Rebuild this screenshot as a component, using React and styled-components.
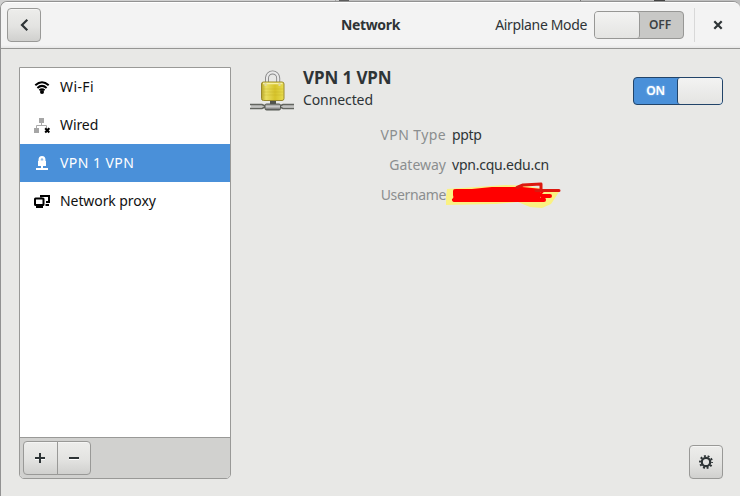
import React from "react";
import styled, { createGlobalStyle, css } from "styled-components";

const Global = createGlobalStyle`
  * { box-sizing: border-box; }
  body { margin: 0; background: #c9c9c7; }
`;

const Desktop = styled.div`
  width: 740px;
  height: 496px;
  padding-top: 1px;
  overflow: hidden;
  background: linear-gradient(90deg, #d0d0d0 0 335px, #a5a5a5 335px 336px, #c8c8c8 336px 339px, #5d5d5d 339px 349px, #bfbfbf 349px 580px, #777 580px 581px, #bfbfbf 581px 654px, #444 654px 665px, #bfbfbf 665px);
  font: 14px/20px "Noto Sans", "Open Sans", sans-serif;
  color: #2e3436;
`;

const Window = styled.div`
  height: 495px;
  display: flex;
  flex-direction: column;
  border: solid #929292;
  border-width: 1px 0 0 1px;
  border-radius: 7px 7px 0 0;
  background: #e8e8e6;
  overflow: hidden;
`;

const Header = styled.header`
  height: 47px;
  flex: none;
  display: grid;
  grid-template-columns: 1fr auto 1fr;
  align-items: center;
  padding: 0 6px;
  background: linear-gradient(#fff 0 1px, #f3f3f3 1px 43px, #e6e6e6 46px);
  border-bottom: 1px solid #959593;
`;

const HeaderEnd = styled.div`
  display: flex;
  align-items: center;
  justify-content: flex-end;
  gap: 7px;
  margin-right: 8px;
`;

const Text = styled.span`
  display: inline-block;
  white-space: nowrap;
  letter-spacing: ${(p) => p.$track || 0}px;
`;

const Title = styled(Text)`
  font-weight: 700;
`;

const raised = css`
  border: 1px solid #999997;
  background: linear-gradient(#ededeb, #e3e3e1 55%, #d0d0ce);
  box-shadow: inset 0 1px #f5f5f4;
`;

const Button = styled.button`
  ${raised}
  width: 34px;
  height: 34px;
  padding: 0;
  display: grid;
  place-items: center;
  border-radius: 4px;
  color: #2e3436;
`;

const SegmentedButton = styled(Button)`
  &:first-child { width: 35px; border-radius: 4px 0 0 4px; padding-right: 1px; }
  &:last-child { margin-left: -1px; border-radius: 0 4px 4px 0; }
`;

const SwitchTrack = styled.div`
  width: 90px;
  height: 28px;
  display: flex;
  flex: none;
  flex-direction: ${(p) => (p.$on ? "row" : "row-reverse")};
  border: 1px solid ${(p) => (p.$on ? "#224469" : "#979795")};
  border-radius: 4px;
  background: ${(p) => (p.$on ? "#4a90d9" : "#c8c8c6")};
  overflow: hidden;
`;

const SwitchLabel = styled.span`
  flex: 1;
  text-align: center;
  font-size: 12px;
  line-height: 26px;
  font-weight: 600;
  letter-spacing: ${(p) => (p.$on ? -0.3 : -0.1)}px;
  padding-right: ${(p) => (p.$on ? 0 : 3)}px;
  color: ${(p) => (p.$on ? "#fff" : "#3c4143")};
  text-shadow: ${(p) => (p.$on ? "0 0 2px #a9d1f7" : "none")};
`;

const Knob = styled.span`
  width: 45px;
  border: solid ${(p) => (p.$on ? "#224469" : "#979795")};
  border-width: ${(p) => (p.$on ? "0 0 0 1px" : "0 1px 0 0")};
  border-radius: ${(p) => (p.$on ? "3px 0 0 3px" : "0 3px 3px 0")};
  background: linear-gradient(#f3f3f2, #e4e4e2);
`;

const Divider = styled.i`
  width: 1px;
  height: 34px;
  margin: 0 8px 0 3px;
  background: #d8d8d8;
`;

const Content = styled.main`
  flex: 1;
  display: flex;
  gap: 18px;
  padding: 18px 17px 17px 18px;
`;

const Sidebar = styled.aside`
  width: 212px;
  display: flex;
  flex-direction: column;
  border: 1px solid #999997;
  border-radius: 0 0 5px 5px;
  background: #fff;
  overflow: hidden;
`;

const Connections = styled.div`
  flex: 1;
`;

const Row = styled.div`
  height: 38px;
  display: flex;
  align-items: center;
  gap: 10px;
  padding-left: 14px;
  background: ${(p) => (p.$active ? "#4a90d9" : "transparent")};
  color: ${(p) => (p.$active ? "#fff" : "#111")};
  svg { margin-top: 2px; }
`;

const Tools = styled.div`
  height: 41px;
  display: flex;
  padding: 3px;
  border-top: 1px solid #999997;
  background: #d1d1cf;
`;

const Details = styled.section`
  flex: 1;
  display: flex;
  flex-direction: column;
`;

const Summary = styled.div`
  display: flex;
  align-items: flex-start;
  height: 53px;
`;

const Names = styled.div`
  flex: 1;
  margin-left: 6px;
`;

const Name = styled(Text)`
  display: block;
  font-size: 17px;
  line-height: 22px;
  font-weight: 700;
`;

const Status = styled(Text)`
  display: block;
  line-height: 22px;
`;

const SwitchSlot = styled.div`
  margin-top: 10px;
`;

const Facts = styled.div`
  flex: 1;
  display: grid;
  grid-template-columns: 197px 1fr;
  grid-auto-rows: 30px;
  column-gap: 6px;
  line-height: 30px;
`;

const FactLabel = styled(Text)`
  text-align: right;
  color: #8b8e8f;
`;

const FactValue = styled(Text)`
  svg { display: block; margin: 2px 0 0 -6px; }
`;

const DetailFooter = styled.div`
  display: flex;
  justify-content: flex-end;
`;

const Back = () => (
  <svg width="16" height="16" fill="none" stroke="currentColor" strokeWidth="2.2">
    <path d="M11.3 2.8 6 8l5.3 5.2" />
  </svg>
);

const Close = () => (
  <svg width="16" height="16" fill="none" stroke="#2e3436" strokeWidth="2.2">
    <path d="m4.3 4.3 7.4 7.4m0-7.4-7.4 7.4" />
  </svg>
);

const Plus = () => (
  <svg width="16" height="16" fill="none" strokeWidth="2">
    <path d="M3 9h10" stroke="#fff" />
    <path d="M8 3v10M3 8h10" stroke="#2e3436" />
  </svg>
);

const Minus = () => (
  <svg width="16" height="16" fill="none" strokeWidth="2">
    <path d="M3 9h10" stroke="#fff" />
    <path d="M3 8h10" stroke="#2e3436" />
  </svg>
);

const Gear = () => (
  <svg width="16" height="16" fill="none" stroke="#2e3436">
    <circle cx="8" cy="8" r="4.2" strokeWidth="2.2" />
    <circle cx="8" cy="8" r="6" strokeWidth="2" strokeDasharray="1.9 1.87" strokeDashoffset=".95" />
  </svg>
);

const Wifi = () => (
  <svg width="16" height="16" fill="none" stroke="#000" strokeWidth="2">
    <path d="M1.3 5.3Q8 -.7 14.7 5.3M3.4 7.9q4.6-4 9.2 0M5.4 10.2q2.6-2 5.2 0" />
    <circle cx="8" cy="12" r="2" fill="#000" stroke="none" />
  </svg>
);

const Wired = () => (
  <svg width="16" height="16" fill="none">
    <path d="M5 0h5v5H5zM0 10h5v5H0z" fill="#a6a6a6" />
    <path d="M7.5 5v2.5M2.5 10V7.5h10V10" stroke="#aaa" />
    <path d="m11.2 10.2 4.1 4.3m0-4.3-4.1 4.3" stroke="#000" strokeWidth="2" />
  </svg>
);

const VpnIcon = () => (
  <svg width="16" height="16">
    <path d="M4.5 5V4a3.5 4 0 0 1 7 0v1h.5v5H9v2h5v2H2v-2h5v-2H4V5z" fill="#fff" />
    <path d="M6.8 4.6V3.4a1.2 1.2 0 0 1 2.4 0v1.2z" fill="#8ebbe8" />
  </svg>
);

const Proxy = () => (
  <svg width="16" height="16" fill="none" stroke="#000" strokeWidth="2">
    <path d="M7 3.5V2h8v6h-3" />
    <path d="M11.5 11H15" />
    <rect x="1" y="4.5" width="8.5" height="6.5" rx=".5" fill="#fff" />
    <path d="M2 13h7" />
    <path d="M5.5 11v2" strokeWidth="4" />
  </svg>
);

const PadlockNetwork = () => (
  <svg width="48" height="48" fill="none">
    <defs>
      <linearGradient id="brass">
        <stop stopColor="#b7a52a" />
        <stop offset=".2" stopColor="#eadf62" />
        <stop offset=".6" stopColor="#d6c32b" />
        <stop offset="1" stopColor="#e8dd50" />
      </linearGradient>
      <linearGradient id="cable" x2="0" y2="1">
        <stop stopColor="#888" />
        <stop offset=".45" stopColor="#ccc" />
        <stop offset="1" stopColor="#555" />
      </linearGradient>
    </defs>
    <path d="M2 39h43" stroke="#c2c2c0" strokeWidth="3" />
    <path d="M1 37.5h12l3 1.5h15l3-1.5h11M1 41.5h12l3-1.5h15l3 1.5h11" stroke="#62645f" strokeWidth="1.5" />
    <path d="M21 33h6v4h-6z" fill="#51534d" />
    <rect x="16" y="37" width="15.5" height="6" rx="1.5" fill="url(#cable)" stroke="#555852" />
    <path d="M18 18v-7a5.6 5.6 0 0 1 11.2 0v7" stroke="#858585" strokeWidth="4" />
    <path d="M18 18v-7a5.6 5.6 0 0 1 11.2 0v7" stroke="#e9e9e9" strokeWidth="2.2" />
    <rect x="12.5" y="15" width="22.5" height="18.5" rx="2" fill="url(#brass)" stroke="#99892c" />
    <path d="M14 16.5h23" stroke="none" />
    <path d="M14 16.5h19.5" stroke="#f8f1a4" strokeWidth="1.6" />
    <path d="M16.5 16v3M30.5 16v3" stroke="#ded7a0" strokeWidth="2" />
    <path d="M14 22h20M14 25h20M14 28h20" stroke="#bca922" strokeOpacity=".3" />
  </svg>
);

const Redaction = () => (
  <svg width="122" height="28" fill="none" strokeLinecap="round" strokeLinejoin="round">
    <path d="M1 7 30 5 60 3l22 1 31 6-8 12-9 4-12-1-12-5-22 2-51 1z" fill="#faf182" />
    <path d="M8 8h17l20-2h33l16 2v9l-8 3-79-1z" fill="#f00" />
    <path d="M9 9v4l5 1-6 4h79M10 9h16l20-2h30l20 2-7 8M80 18h18l-2-4h8" stroke="#f00" strokeWidth="4" />
    <path d="m71 5.5 6-2.5 18-1v6M90 8.5h23" stroke="#dc180f" strokeWidth="3" />
  </svg>
);

function Switch({ on }) {
  return (
    <SwitchTrack $on={on} role="switch" aria-checked={on}>
      <SwitchLabel $on={on}>{on ? "ON" : "OFF"}</SwitchLabel>
      <Knob $on={on} />
    </SwitchTrack>
  );
}

const connections = [
  { name: "Wi-Fi", Icon: Wifi, track: 0.4 },
  { name: "Wired", Icon: Wired, track: -0.1 },
  { name: "VPN 1 VPN", Icon: VpnIcon, active: true, track: 0.45 },
  { name: "Network proxy", Icon: Proxy, track: -0.08 },
];

export default function App() {
  return (
    <Desktop>
      <Global />
      <Window>
        <Header>
          <Button aria-label="Back"><Back /></Button>
          <Title $track={-0.35}>Network</Title>
          <HeaderEnd>
            <Text $track={-0.35}>Airplane Mode</Text>
            <Switch on={false} />
            <Divider />
            <Close />
          </HeaderEnd>
        </Header>
        <Content>
          <Sidebar>
            <Connections>
              {connections.map(({ name, Icon, active, track }) => (
                <Row key={name} $active={active}>
                  <Icon />
                  <Text $track={track}>{name}</Text>
                </Row>
              ))}
            </Connections>
            <Tools>
              <SegmentedButton aria-label="Add"><Plus /></SegmentedButton>
              <SegmentedButton aria-label="Remove"><Minus /></SegmentedButton>
            </Tools>
          </Sidebar>
          <Details>
            <Summary>
              <PadlockNetwork />
              <Names>
                <Name $track={-0.1}>VPN 1 VPN</Name>
                <Status $track={-0.1}>Connected</Status>
              </Names>
              <SwitchSlot><Switch on /></SwitchSlot>
            </Summary>
            <Facts>
              <FactLabel $track={0.4}>VPN Type</FactLabel>
              <FactValue $track={-0.3}>pptp</FactValue>
              <FactLabel>Gateway</FactLabel>
              <FactValue $track={-0.23}>vpn.cqu.edu.cn</FactValue>
              <FactLabel $track={-0.35}>Username</FactLabel>
              <FactValue><Redaction /></FactValue>
            </Facts>
            <DetailFooter>
              <Button aria-label="Settings"><Gear /></Button>
            </DetailFooter>
          </Details>
        </Content>
      </Window>
    </Desktop>
  );
}
